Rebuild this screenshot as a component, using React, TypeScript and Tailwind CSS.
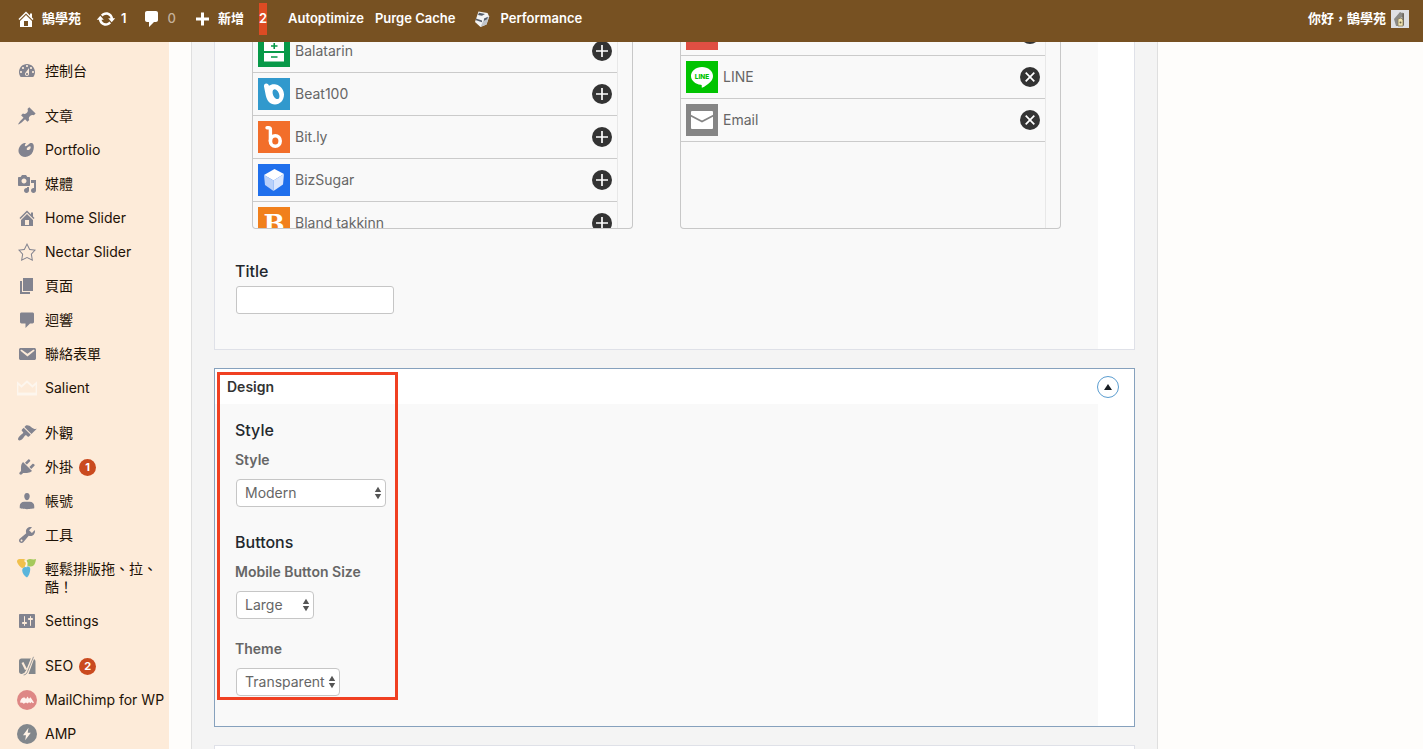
import type { ReactNode } from 'react';

const PATHS = {
  home: 'M16 8.5l1.53 1.53-1.06 1.06L10 4.6l-6.47 6.49-1.06-1.06L10 2.5l4 4v-2h2v4zm-6-2.46l6 5.99V18H4v-5.97zM12 17v-5H8v5h4z',
  comments: 'M5 2h9c1.1 0 2 .9 2 2v7c0 1.1-.9 2-2 2h-2l-5 5v-5H5c-1.1 0-2-.9-2-2V4c0-1.1.9-2 2-2z',
  sideComments: 'M4.5 2.500h11c.8 0 1.500.6 1.500 1.400v8.200c0 .8-.7 1.400-1.500 1.400h-2.500l-4.500 4.500v-4.500h-4c-.8 0-1.500-.6-1.500-1.400V3.900c0-.8.7-1.400 1.500-1.400z',
  update:
    'M10.2 3.28c3.53 0 6.43 2.61 6.92 6h2.08l-3.5 4-3.5-4h2.32c-.45-1.97-2.21-3.45-4.32-3.45-1.45 0-2.73.71-3.54 1.78L4.95 5.66C6.23 4.2 8.11 3.28 10.2 3.28zm-.4 13.44c-3.52 0-6.43-2.61-6.92-6H.8l3.5-4c1.17 1.33 2.33 2.67 3.5 4H5.48c.45 1.97 2.21 3.45 4.32 3.45 1.45 0 2.73-.71 3.54-1.78l1.71 1.95c-1.28 1.46-3.15 2.38-5.25 2.38z',
  plus: 'M17 8.500v3h-5v5H9v-5H4v-3h5v-5h3v5h5z',
  dashboard:
    'M3.76 16h12.48c1.1-1.37 1.76-3.11 1.76-5 0-4.42-3.58-8-8-8s-8 3.58-8 8c0 1.89.66 3.63 1.76 5zM10 4c.55 0 1 .45 1 1s-.45 1-1 1-1-.45-1-1 .45-1 1-1zM6 6c.55 0 1 .45 1 1s-.45 1-1 1-1-.45-1-1 .45-1 1-1zm8 0c.55 0 1 .45 1 1s-.45 1-1 1-1-.45-1-1 .45-1 1-1zm-5.37 5.55L12 7v6c0 1.1-.9 2-2 2s-2-.9-2-2c0-.57.24-1.08.63-1.45zM4 10c.55 0 1 .45 1 1s-.45 1-1 1-1-.45-1-1 .45-1 1-1zm12 0c.55 0 1 .45 1 1s-.45 1-1 1-1-.45-1-1 .45-1 1-1zm-5 3c0-.55-.45-1-1-1s-1 .45-1 1 .45 1 1 1 1-.45 1-1z',
  post: 'M10.44 3.02l1.82-1.82 6.36 6.35-1.83 1.82c-1.05-.68-2.48-.57-3.41.36l-.75.75c-.92.93-1.04 2.35-.35 3.41l-1.83 1.82-2.41-2.41-2.8 2.79c-.42.42-3.38 2.71-3.8 2.29s1.86-3.39 2.28-3.81l2.79-2.79L4.1 9.36l1.83-1.82c1.05.69 2.48.57 3.4-.36l.75-.75c.93-.92 1.05-2.35.36-3.41z',
  art: 'M8.55 3.06c1.01.34-1.95 2.01-.1 3.13 1.04.63 3.31-2.22 4.45-2.86.97-.54 2.67-.65 3.53 1.23 1.09 2.38.14 8.57-3.79 11.06-3.97 2.5-8.97 1.23-10.7-2.66-2.01-4.53 3.12-11.09 6.61-9.9zm1.21 6.45c.73 1.64 4.7-.5 3.79-2.8-.59-1.49-4.48 1.25-3.79 2.8z',
  media:
    'M13 11V4c0-.55-.45-1-1-1h-1.67L9 1H5L3.67 3H2c-.55 0-1 .45-1 1v7c0 .55.45 1 1 1h10c.55 0 1-.45 1-1zM7 4.5c1.38 0 2.5 1.12 2.5 2.5S8.38 9.5 7 9.5 4.5 8.38 4.5 7 5.62 4.5 7 4.5zM14 6h5v10.5c0 1.38-1.12 2.5-2.5 2.5S14 17.88 14 16.5s1.12-2.5 2.5-2.5c.17 0 .34.02.5.05V9h-3V6zm-4 8.05V13h2v3.5c0 1.38-1.12 2.5-2.5 2.5S7 17.88 7 16.5 8.12 14 9.5 14c.17 0 .34.02.5.05z',
  star: 'M10 1L7 7l-6 .75 4.13 4.62L4 19l6-3 6 3-1.12-6.63L19 7.75 13 7zm0 2.24l2.34 4.69 4.65.58-3.18 3.56.87 5.15L10 14.88l-4.68 2.34.87-5.15-3.18-3.56 4.65-.58z',
  page: 'M6 15V2h10v13H6zm-1 1h8v2H3V5h2v11z',
  email:
    'M3.87 4h13.25C18.37 4 19 4.59 19 5.79v8.42c0 1.19-.63 1.79-1.88 1.79H3.87c-1.25 0-1.88-.6-1.88-1.79V5.79c0-1.2.63-1.79 1.88-1.79zm6.62 8.6l6.74-5.53c.24-.2.43-.66.13-1.07-.29-.41-.82-.42-1.17-.17l-5.7 3.86L4.8 5.83c-.35-.25-.88-.24-1.17.17-.3.41-.11.87.13 1.07z',
  appearance:
    'M14.48 11.06L7.41 3.99l1.5-1.5c.5-.56 2.3-.47 3.51.32 1.21.8 1.43 1.28 2.91 2.1 1.18.64 2.45 1.26 4.45.85zm-.71.71L6.7 4.7 4.93 6.47c-.39.39-.39 1.02 0 1.41l1.06 1.06c.39.39.39 1.03 0 1.42-.6.6-1.43 1.11-2.21 1.69-.35.26-.7.53-1.01.84C1.43 14.23.4 16.08 1.4 17.07c.99 1 2.84-.03 4.18-1.36.31-.31.58-.66.85-1.02.57-.78 1.08-1.61 1.69-2.21.39-.39 1.02-.39 1.41 0l1.06 1.06c.39.39 1.02.39 1.41 0z',
  plugins:
    'M13.11 4.36L9.87 7.6 8 5.73l3.24-3.24c.35-.34 1.05-.2 1.56.32.52.51.66 1.21.31 1.55zm-8 1.77l.91-1.12 9.01 9.01-1.19.84c-.71.71-2.63 1.16-3.82 1.16H6.14L4.9 17.26c-.59.59-1.54.59-2.12 0-.59-.58-.59-1.53 0-2.12l1.24-1.24v-3.88c0-1.13.4-3.19 1.09-3.89zm7.26 3.97l3.24-3.24c.34-.35 1.04-.21 1.55.31.52.51.66 1.21.31 1.55l-3.24 3.25z',
  users:
    'M10 9.25c-2.27 0-2.73-3.44-2.73-3.44C7 4.02 7.82 2 9.97 2c2.16 0 2.98 2.02 2.71 3.81 0 0-.41 3.44-2.68 3.44zM7.200 10.800h5.600c2.500 0 4.450 1.900 4.450 4.200v2.300s-3.650.85-7.250.85-7.250-.85-7.250-.85V15c0-2.300 1.950-4.200 4.450-4.200z',
  tools:
    'M16.68 9.77c-1.34 1.34-3.3 1.67-4.95.99l-5.41 6.52c-.99.99-2.59.99-3.58 0s-.99-2.59 0-3.57l6.52-5.42c-.68-1.65-.35-3.61.99-4.95 1.28-1.28 3.12-1.62 4.72-1.06l-2.89 2.89 2.82 2.82 2.86-2.87c.53 1.58.18 3.39-1.08 4.65zM3.81 16.21c.4.39 1.04.39 1.43 0 .4-.4.4-1.04 0-1.43-.39-.4-1.03-.4-1.43 0-.39.39-.39 1.03 0 1.43z',
  settings:
    'M18 16V4c0-.55-.45-1-1-1H3c-.55 0-1 .45-1 1v12c0 .55.45 1 1 1h14c.55 0 1-.45 1-1zM8 11h1c.55 0 1 .45 1 1s-.45 1-1 1H8v1.5c0 .28-.22.5-.5.5s-.5-.22-.5-.5V13H6c-.55 0-1-.45-1-1s.45-1 1-1h1V5.5c0-.28.22-.5.5-.5s.5.22.5.5V11zm5-2h-1c-.55 0-1-.45-1-1s.45-1 1-1h1V5.5c0-.28.22-.5.5-.5s.5.22.5.5V7h1c.55 0 1 .45 1 1s-.45 1-1 1h-1v5.5c0 .28-.22.5-.5.5s-.5-.22-.5-.5V9z',
};

function Dash({ name }: { name: keyof typeof PATHS }) {
  return (
    <svg viewBox="0 0 20 20" className="size-5 shrink-0" fill="currentColor" aria-hidden="true">
      <path d={PATHS[name]} />
    </svg>
  );
}

function CrownIcon() {
  return (
    <svg viewBox="0 0 20 20" className="size-5 shrink-0" fill="none" stroke="#fdf6ee" strokeWidth="1.800" aria-hidden="true">
      <path d="M.5 5v11.500h19V5l-4 3.500L10 3.500 4.500 8.500z" />
      <path d="M.5 15.500h19" />
    </svg>
  );
}

function ComposerIcon() {
  return (
    <svg viewBox="0 0 20 20" className="size-5 shrink-0" aria-hidden="true">
      <path d="M0 2.500C0 1 1 0 2.500 0h4C8 0 9 1 9 2.500s.8 3.500-.7 5-3.300 2-4.800.5S0 4 0 2.500z" fill="#f0c04d" />
      <path d="M9 3c.5-2 2-3 4-3 2 0 3.500 1 6 0-.5 4.500-2 7.500-5 7.500S8.500 6 9 3z" fill="#a5c95b" />
      <path d="M9.500 7.500c3.500-.5 4 1.500 3.700 3.500-.4 3-1.200 5.500-3.200 7.500-2.500-1.500-4.800-4.500-4.800-7 0-2.500 1.800-3.700 4.300-4z" fill="#5ab5dc" />
      <path d="M7.500 1.500c2.500 1 3 3 1 6.500" stroke="#fff4e4" strokeWidth="1.800" fill="none" />
    </svg>
  );
}

function YoastIcon() {
  return (
    <svg viewBox="0 0 20 20" className="size-5 shrink-0" aria-hidden="true">
      <path d="M4.500 2.500H14L9 18H4.500C3 18 2 17 2 15.500V5c0-1.500 1-2.500 2.500-2.500zM17 3c.8.5 1.500 1.300 1.500 2.500V18h-7z" fill="#82878c" />
      <path d="M5.500 6.500l3.500 7M15.500 1.500L10 15c-.8 2-2 3.500-4.500 3.500" stroke="#fdebd9" strokeWidth="2.200" fill="none" />
      <path d="M16.500.8L10.600 15.500c-.7 1.900-1.800 3.300-4 3.500" stroke="#82878c" strokeWidth=".8" fill="none" />
    </svg>
  );
}

function MailChimpIcon() {
  return (
    <svg viewBox="0 0 20 20" className="size-5 shrink-0" aria-hidden="true">
      <circle cx="10" cy="10" r="10" fill="#de8785" />
      <path d="M3 12.500c.5-3 1.800-4.500 3.500-5 1.200-.3 2 .5 2.500 1.500l1.500-2.500 1.500 2.300 1.500-1.500 3.500 5.200-1 .8-1.800-1.300-.5 1.300-1.700-1-1.500 1.200-1.500-1-2.300 1.200-1.200-.9z" fill="#fff3ee" />
    </svg>
  );
}

function AmpIcon() {
  return (
    <svg viewBox="0 0 20 20" className="size-5 shrink-0" aria-hidden="true">
      <circle cx="10" cy="10" r="10" fill="#82878c" />
      <path d="M11.500 3.800L6 11.300h3l-.8 5 5.600-7.500h-3.100z" fill="#fff3e6" />
    </svg>
  );
}

function CubeIcon() {
  return (
    <svg viewBox="0 0 18 18" className="size-[18px] shrink-0" aria-hidden="true">
      <path d="M5.500 1.500l9 1.500 1.700 3.500-2.700 8-6 2.500-5.500-5z" fill="#f4f4f4" />
      <path d="M11 9l5.200-2.500-2.700 8-6 2.500z" fill="#c0c4cb" />
      <path d="M6 2.800l6 1.200-3 1.700-4-.7zM3 8.500l6 2v1.800l-6-2zM11 8.500l4-1.800-1 2.500-3 1.500z" fill="#545c69" />
    </svg>
  );
}

function AvatarIcon() {
  return (
    <svg viewBox="0 0 18 18" className="size-[18px] shrink-0" aria-hidden="true">
      <rect width="18" height="18" fill="#dfe0e4" />
      <path d="M3 9l6-7 4 2-1 3-3 1-1 8H5z" fill="#8b8a86" />
      <path d="M11.500 2.500l1.500 1v12h-2z" fill="#6d675c" />
      <path d="M7 9l3-1 2 2v6H7z" fill="#f0e4b0" stroke="#85795a" strokeWidth=".8" />
      <circle cx="9.500" cy="12.500" r="1" fill="#6b5f42" />
    </svg>
  );
}

type MenuEntry = { label: string; icon: ReactNode; badge?: string; gap?: boolean };

const MENU: MenuEntry[] = [
  { label: '控制台', icon: <Dash name="dashboard" /> },
  { label: '文章', icon: <Dash name="post" />, gap: true },
  { label: 'Portfolio', icon: <Dash name="art" /> },
  { label: '媒體', icon: <Dash name="media" /> },
  { label: 'Home Slider', icon: <Dash name="home" /> },
  { label: 'Nectar Slider', icon: <Dash name="star" /> },
  { label: '頁面', icon: <Dash name="page" /> },
  { label: '迴響', icon: <Dash name="sideComments" /> },
  { label: '聯絡表單', icon: <Dash name="email" /> },
  { label: 'Salient', icon: <CrownIcon /> },
  { label: '外觀', icon: <Dash name="appearance" />, gap: true },
  { label: '外掛', icon: <Dash name="plugins" />, badge: '1' },
  { label: '帳號', icon: <Dash name="users" /> },
  { label: '工具', icon: <Dash name="tools" /> },
  { label: '輕鬆排版拖、拉、酷！', icon: <ComposerIcon /> },
  { label: 'Settings', icon: <Dash name="settings" /> },
  { label: 'SEO', icon: <YoastIcon />, badge: '2', gap: true },
  { label: 'MailChimp for WP', icon: <MailChimpIcon /> },
  { label: 'AMP', icon: <AmpIcon /> },
];

function Tile({ color, children }: { color: string; children?: ReactNode }) {
  return (
    <svg viewBox="0 0 32 32" className="size-8 shrink-0" aria-hidden="true">
      <rect width="32" height="32" fill={color} />
      {children}
    </svg>
  );
}

type Service = { id: string; name?: string; icon: ReactNode };

const AVAILABLE: Service[] = [
  {
    id: 'balatarin',
    name: 'Balatarin',
    icon: (
      <Tile color="#079948">
        <path d="M6 4h20v12H6zM6 18h20v8.500H6z" fill="#fff" />
        <path d="M13 11h6.500M16.250 8v6M13 22h6.500" stroke="#079948" strokeWidth="1.600" />
      </Tile>
    ),
  },
  {
    id: 'beat100',
    name: 'Beat100',
    icon: (
      <Tile color="#3199cd">
        <path
          fill="#fff"
          d="M6 8.500C5.500 5 10 4.500 11 7.700c1.800-1.500 4.500-1.900 7-1.300 4.900 1.200 8 5.300 8 10.200 0 5.900-4 9.900-9 9.900-5.200 0-7.800-3.500-9.200-9z"
        />
        <ellipse cx="18" cy="16.200" rx="3" ry="5.200" transform="rotate(-24 18 16.200)" fill="#3199cd" />
      </Tile>
    ),
  },
  {
    id: 'bitly',
    name: 'Bit.ly',
    icon: (
      <Tile color="#f26e2a">
        <path d="M9 6.800h1.500c1.200 0 1.900.7 1.900 1.900V20" stroke="#fff" strokeWidth="3.400" strokeLinecap="round" fill="none" />
        <ellipse cx="17.300" cy="20" rx="4.900" ry="5.300" stroke="#fff" strokeWidth="3.600" fill="none" />
      </Tile>
    ),
  },
  {
    id: 'bizsugar',
    name: 'BizSugar',
    icon: (
      <Tile color="#1f6fec">
        <path d="M6 11l10.500-6L26 10l-10.500 6.500z" fill="#fff" />
        <path d="M6 11l9.500 5.500V27L7 21z" fill="#b9d1fa" />
        <path d="M26 10l-10.500 6.500V27l9.500-6.500z" fill="#dae6fd" />
      </Tile>
    ),
  },
  {
    id: 'bland',
    name: 'Bland takkinn',
    icon: (
      <Tile color="#f1801c">
        <text x="16" y="25" textAnchor="middle" fontFamily="DejaVu Serif, serif" fontWeight="700" fontSize="25" fill="#fff">
          B
        </text>
      </Tile>
    ),
  },
];

const SELECTED: Service[] = [
  { id: 'google', icon: <Tile color="#df4f43" /> },
  {
    id: 'line',
    name: 'LINE',
    icon: (
      <Tile color="#00c300">
        <path d="M16 6c6.200 0 11 4 11 9 0 2.300-1 4.200-2.700 6-2.300 2.400-5.800 4.600-7.800 5.600-.8.300-.8-.2-.8-.6.100-.8.500-2-.9-2.200C9.300 23.100 5 19.600 5 15c0-5 4.800-9 11-9z" fill="#fff" />
        <text x="16" y="17.500" textAnchor="middle" fontFamily="Inter, sans-serif" fontWeight="800" fontSize="6.500" fill="#00c300">
          LINE
        </text>
      </Tile>
    ),
  },
  {
    id: 'email',
    name: 'Email',
    icon: (
      <Tile color="#858585">
        <rect x="5" y="7" width="22" height="18" rx="1" fill="#fff" />
        <path d="M4.500 11.500L16 17.500l11.500-6" stroke="#858585" strokeWidth="1.800" fill="none" />
      </Tile>
    ),
  },
];

function ServiceList({ items, action, offset }: { items: Service[]; action: 'add' | 'remove'; offset: string }) {
  return (
    <div className="flex h-[187px] overflow-hidden rounded-b-sm border border-t-0 border-[#c8c8c8] pr-[14px]">
      <div className="flex-1 border-r border-[#e8e8e8]">
        <ul className={offset}>
          {items.map((s) => (
            <li key={s.id} className="flex h-[43px] items-center border-b border-[#cbcbcb] px-[5px] text-sm text-[#666]">
              {s.icon}
              <span className="ml-[5px] flex-1">{s.name}</span>
              <button
                type="button"
                aria-label={`${action} ${s.id}`}
                className="flex size-5 items-center justify-center rounded-full bg-[#333]"
              >
                <svg viewBox="0 0 20 20" className="size-5" stroke="#fff" strokeWidth="1.700" aria-hidden="true">
                  <path d={action === 'add' ? 'M10 4v12M4 10h12' : 'M5.700 5.700l8.600 8.600M14.300 5.700l-8.600 8.600'} />
                </svg>
              </button>
            </li>
          ))}
        </ul>
      </div>
    </div>
  );
}

function Select({ id, options, width }: { id: string; options: string[]; width: string }) {
  return (
    <div className={`relative ml-px mt-[9px] h-7 ${width}`}>
      <select
        id={id}
        className="h-7 w-full appearance-none rounded border border-[#c6c6c6] bg-white pl-2 text-sm text-[#666] outline-none"
      >
        {options.map((o) => (
          <option key={o}>{o}</option>
        ))}
      </select>
      <svg viewBox="0 0 8 14" className="pointer-events-none absolute right-1 top-[7px] h-[14px] w-2" fill="#555" aria-hidden="true">
        <path d="M4 .8L7.200 6H.8zM4 13.200L.8 8h6.400z" />
      </svg>
    </div>
  );
}

const heading = 'text-base font-medium leading-6 text-[#23282d]';
const label = 'block text-sm font-semibold leading-5 text-[#666]';

export default function App() {
  return (
    <div className="flex h-screen flex-col overflow-hidden bg-[#fefdfb] font-['Inter','Noto_Sans_CJK_TC',sans-serif]">
      <header className="flex h-[42px] shrink-0 items-center bg-[#775122] pb-[5px] pl-4 pr-[14px] text-[13px] font-semibold text-white">
        <a href="#site" className="flex items-center gap-[6px]">
          <Dash name="home" />
          鵠學苑
        </a>
        <a href="#updates" className="ml-[15px] flex items-center gap-[5px]">
          <Dash name="update" />1
        </a>
        <a href="#comments" className="ml-[15px] flex items-center gap-[6px]">
          <Dash name="comments" />
          <span className="font-medium text-[#c4b09a]">0</span>
        </a>
        <a href="#new" className="ml-4 flex items-center gap-[6px]">
          <Dash name="plus" />
          新增
        </a>
        <span className="ml-[15px] flex h-8 items-center bg-[#dd4b23]">2</span>
        <a href="#autoptimize" className="ml-[21px]">
          Autoptimize
        </a>
        <a href="#purge" className="ml-[11px]">
          Purge Cache
        </a>
        <a href="#performance" className="ml-[18px] flex items-center gap-[9px]">
          <CubeIcon />
          Performance
        </a>
        <a href="#profile" className="ml-auto flex items-center gap-[5px]">
          你好，鵠學苑
          <AvatarIcon />
        </a>
      </header>

      <div className="flex min-h-0 flex-1">
        <nav className="w-[169px] shrink-0 bg-[#fdebd9] pt-3" aria-label="Admin menu">
          <ul>
            {MENU.map((m) => (
              <li key={m.label} className={m.gap ? 'mt-[11px]' : ''}>
                <a href={`#${m.label}`} className="flex gap-2 py-2 pl-[17px] text-sm leading-[18px] text-[#1d1206]">
                  <span className="-my-px h-5 text-[#82838f]">{m.icon}</span>
                  <span className="flex flex-1 items-center gap-[6px]">
                    <span>{m.label}</span>
                    {m.badge && (
                      <span className="min-w-[17px] rounded-full bg-[#ca4a1f] text-center text-[11px] font-bold leading-[17px] text-white">
                        {m.badge}
                      </span>
                    )}
                  </span>
                </a>
              </li>
            ))}
          </ul>
        </nav>

        <main className="ml-[22px] mr-[265px] flex-1 border-x border-[#dfdfdf] bg-[#f4f4f4] px-[22px]">
          <section className="border border-t-0 border-[#dfe1e8] bg-white pr-9">
            <div className="bg-[#f9f9f9] pb-[35px]">
              <div className="grid grid-cols-2 gap-[47px] px-[37px]">
                <ServiceList items={AVAILABLE} action="add" offset="-mt-3" />
                <ServiceList items={SELECTED} action="remove" offset="-mt-[29px]" />
              </div>
              <div className="pl-5 pt-[30px]">
                <label htmlFor="title" className={`block ${heading}`}>
                  Title
                </label>
                <input
                  id="title"
                  type="text"
                  className="ml-px mt-[3px] block h-7 w-[158px] rounded-[3px] border border-[#c6c6c6] bg-white px-2 text-sm outline-none"
                />
              </div>
            </div>
          </section>

          <section className="relative mt-[18px] border border-[#86a1bd] bg-white">
            <div className="flex h-[35px] items-center justify-between pl-3 pr-[15px]">
              <h2 className="text-sm font-semibold text-[#333]">Design</h2>
              <button
                type="button"
                aria-label="Toggle Design"
                className="flex size-[22px] items-center justify-center rounded-full border border-[#5b9dd0]"
              >
                <svg viewBox="0 0 8 6" className="h-[6px] w-2" aria-hidden="true">
                  <path d="M4 0l4 6H0z" fill="#191e23" />
                </svg>
              </button>
            </div>
            <div className="mr-9 bg-[#f9f9f9] pb-[30px] pl-5 pt-[14px]">
              <h3 className={heading}>Style</h3>
              <label htmlFor="style" className={`mt-2 ${label}`}>
                Style
              </label>
              <Select id="style" options={['Modern']} width="w-[150px]" />
              <h3 className={`mt-[23px] ${heading}`}>Buttons</h3>
              <label htmlFor="size" className={`mt-2 ${label}`}>
                Mobile Button Size
              </label>
              <Select id="size" options={['Large']} width="w-[78px]" />
              <label htmlFor="theme" className={`mt-5 ${label}`}>
                Theme
              </label>
              <Select id="theme" options={['Transparent']} width="w-[104px]" />
            </div>
            <div className="pointer-events-none absolute left-[2px] top-[3px] h-[328px] w-[181px] border-[3px] border-[#f04022]" />
          </section>

          <section className="mt-[18px] h-10 border border-[#dfe1e8] bg-white" />
        </main>
      </div>
    </div>
  );
}
